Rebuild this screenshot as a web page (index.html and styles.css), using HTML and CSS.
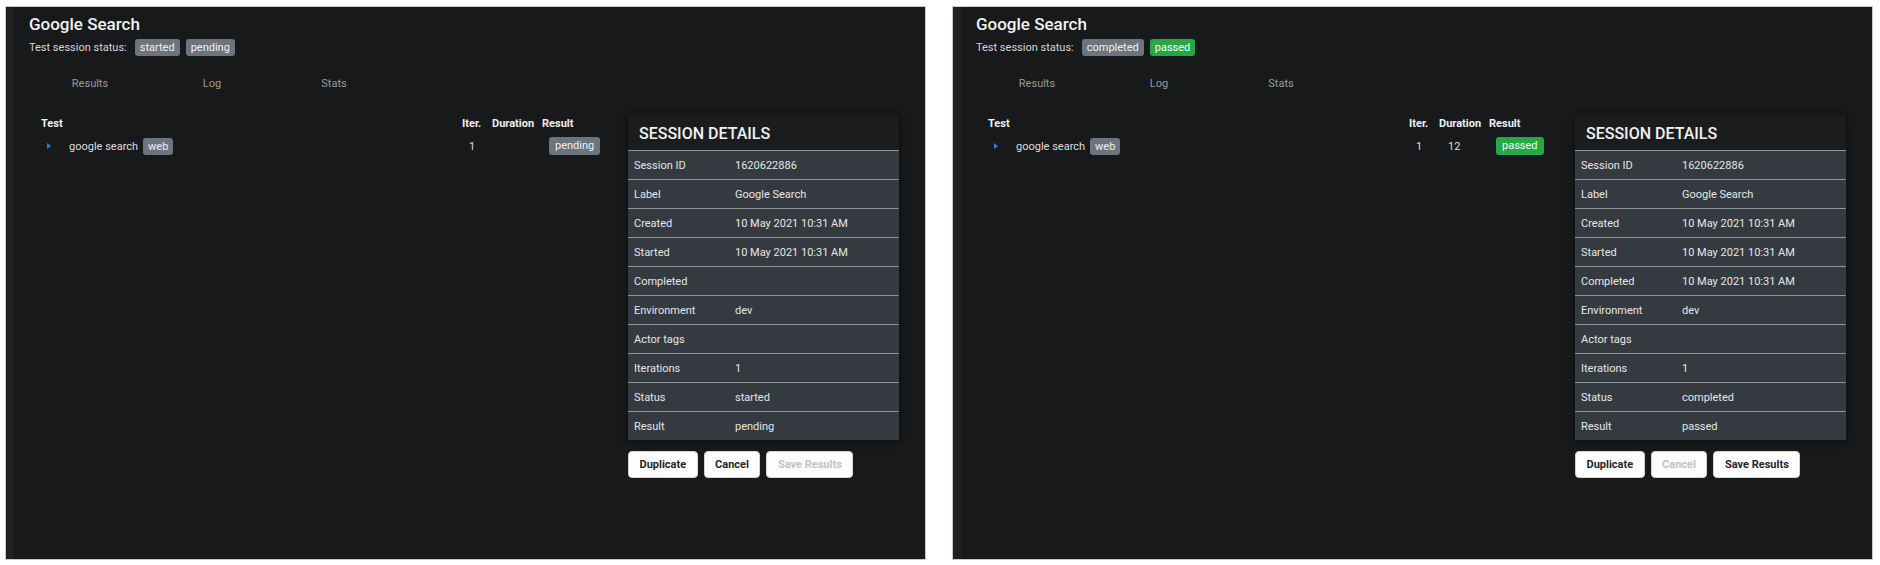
FILE: index.html
```html
<!DOCTYPE html>
<html lang="en">
<head>
<meta charset="utf-8">
<title>Google Search sessions</title>
<link rel="stylesheet" href="styles.css">
</head>
<body>
<div class="screens">
  <section class="panel">
    <div class="strip"></div>
    <div class="main">
      <h1 class="title">Google Search</h1>
      <div class="status"><span class="status-label">Test session status:</span><span class="badge">started</span><span class="badge">pending</span></div>
      <nav class="tabs"><span class="tab">Results</span><span class="tab">Log</span><span class="tab">Stats</span></nav>
      <div class="content">
        <div class="tests">
          <div class="thead"><span>Test</span><span>Iter.</span><span>Duration</span><span>Result</span></div>
          <div class="trow">
            <span class="name"><span class="caret"></span><span>google search</span><span class="badge">web</span></span>
            <span class="iter">1</span>
            <span class="dur"></span>
            <span class="res"><span class="badge badge-lg">pending</span></span>
          </div>
        </div>
        <div class="details">
          <div class="sd">
            <h2 class="sd-title">SESSION DETAILS</h2>
            <div class="sd-row"><span class="k">Session ID</span><span class="v">1620622886</span></div>
            <div class="sd-row"><span class="k">Label</span><span class="v">Google Search</span></div>
            <div class="sd-row"><span class="k">Created</span><span class="v">10 May 2021 10:31 AM</span></div>
            <div class="sd-row"><span class="k">Started</span><span class="v">10 May 2021 10:31 AM</span></div>
            <div class="sd-row"><span class="k">Completed</span><span class="v"></span></div>
            <div class="sd-row"><span class="k">Environment</span><span class="v">dev</span></div>
            <div class="sd-row"><span class="k">Actor tags</span><span class="v"></span></div>
            <div class="sd-row"><span class="k">Iterations</span><span class="v">1</span></div>
            <div class="sd-row"><span class="k">Status</span><span class="v">started</span></div>
            <div class="sd-row"><span class="k">Result</span><span class="v">pending</span></div>
          </div>
          <div class="actions">
            <button class="btn">Duplicate</button>
            <button class="btn">Cancel</button>
            <button class="btn disabled">Save Results</button>
          </div>
        </div>
      </div>
    </div>
  </section>

  <section class="panel">
    <div class="strip"></div>
    <div class="main">
      <h1 class="title">Google Search</h1>
      <div class="status"><span class="status-label">Test session status:</span><span class="badge">completed</span><span class="badge badge-green">passed</span></div>
      <nav class="tabs"><span class="tab">Results</span><span class="tab">Log</span><span class="tab">Stats</span></nav>
      <div class="content">
        <div class="tests">
          <div class="thead"><span>Test</span><span>Iter.</span><span>Duration</span><span>Result</span></div>
          <div class="trow">
            <span class="name"><span class="caret"></span><span>google search</span><span class="badge">web</span></span>
            <span class="iter">1</span>
            <span class="dur">12</span>
            <span class="res"><span class="badge badge-lg badge-green">passed</span></span>
          </div>
        </div>
        <div class="details">
          <div class="sd">
            <h2 class="sd-title">SESSION DETAILS</h2>
            <div class="sd-row"><span class="k">Session ID</span><span class="v">1620622886</span></div>
            <div class="sd-row"><span class="k">Label</span><span class="v">Google Search</span></div>
            <div class="sd-row"><span class="k">Created</span><span class="v">10 May 2021 10:31 AM</span></div>
            <div class="sd-row"><span class="k">Started</span><span class="v">10 May 2021 10:31 AM</span></div>
            <div class="sd-row"><span class="k">Completed</span><span class="v">10 May 2021 10:31 AM</span></div>
            <div class="sd-row"><span class="k">Environment</span><span class="v">dev</span></div>
            <div class="sd-row"><span class="k">Actor tags</span><span class="v"></span></div>
            <div class="sd-row"><span class="k">Iterations</span><span class="v">1</span></div>
            <div class="sd-row"><span class="k">Status</span><span class="v">completed</span></div>
            <div class="sd-row"><span class="k">Result</span><span class="v">passed</span></div>
          </div>
          <div class="actions">
            <button class="btn">Duplicate</button>
            <button class="btn disabled">Cancel</button>
            <button class="btn">Save Results</button>
          </div>
        </div>
      </div>
    </div>
  </section>
</div>
</body>
</html>
```
FILE: styles.css
```css
* { box-sizing: border-box; }
html, body { margin: 0; padding: 0; background: #ffffff; }
body { font-family: Roboto, "Liberation Sans", sans-serif; }

.screens { display: flex; gap: 26px; padding: 6px 0 0 5px; }

.panel {
  width: 921px;
  height: 554px;
  border: 1px solid #c9c9c9;
  display: flex;
  background: #18191b;
  overflow: hidden;
}
.strip { width: 8px; flex: none; background: #202124; }
.main { flex: 1; padding: 6px 26px 0 15px; }

.title { margin: 0; font-size: 17px; font-weight: 500; line-height: 22px; color: #f1f1f1; }

.status { display: flex; align-items: center; gap: 6px; margin-top: 4px; height: 17px; font-size: 11px; color: #d6d6d6; }
.status-label { margin-right: 2px; }

.badge {
  display: inline-block;
  height: 17px;
  line-height: 17px;
  padding: 0 5px;
  border-radius: 3px;
  background: #6c757d;
  color: #eef0f2;
  font-size: 11px;
}
.badge-lg { height: 18px; line-height: 18px; padding: 0 6px; }
.badge-green { background: #28a745; color: #f4fff6; }

.tabs { display: flex; margin-top: 5px; border-bottom: 1px solid #1d1e21; }
.tab { width: 122px; text-align: center; padding: 16px 0 15px; line-height: 14px; font-size: 11px; color: #9c9c9c; }

.content { display: flex; gap: 18px; margin-top: 8px; }

.tests { flex: 1; padding: 0 12px; }
.thead, .trow { display: grid; grid-template-columns: 1fr 30px 50px 56px; align-items: center; }
.thead { height: 16px; font-size: 11px; font-weight: 700; color: #f0f0f0; }
.trow { margin-top: 6px; height: 18px; font-size: 11px; color: #dedede; }
.name { display: flex; align-items: center; gap: 5px; }
.caret {
  width: 0; height: 0;
  border-left: 4px solid #2b7de3;
  border-top: 3px solid transparent;
  border-bottom: 3px solid transparent;
  margin: 0 13px 0 6px;
}
.iter { padding-left: 7px; }
.dur { padding-left: 9px; }
.res { padding-left: 7px; display: flex; }

.details { width: 271px; flex: none; }
.sd { background: #1b1c1e; box-shadow: 0 1px 6px rgba(0, 0, 0, 0.6); }
.sd-title { margin: 0; padding: 8px 11px 5px; font-size: 16px; font-weight: 500; line-height: 22px; color: #f1f1f1; }
.sd-row {
  display: flex;
  align-items: center;
  height: 29px;
  border-top: 1px solid #8e949a;
  background: #343a40;
  font-size: 11px;
  color: #e6e6e6;
}
.sd-row .k { width: 107px; padding-left: 6px; flex: none; }

.actions { display: flex; gap: 6px; margin-top: 11px; }
.btn {
  height: 27px;
  padding: 0 10.5px;
  border-radius: 4px;
  border: 1px solid #d4d4d4;
  background: #ffffff;
  font-family: Roboto, "Liberation Sans", sans-serif;
  font-size: 11px;
  font-weight: 700;
  color: #212529;
}
.btn.disabled { color: #c2c2c2; background: #fdfdfd; }
```
